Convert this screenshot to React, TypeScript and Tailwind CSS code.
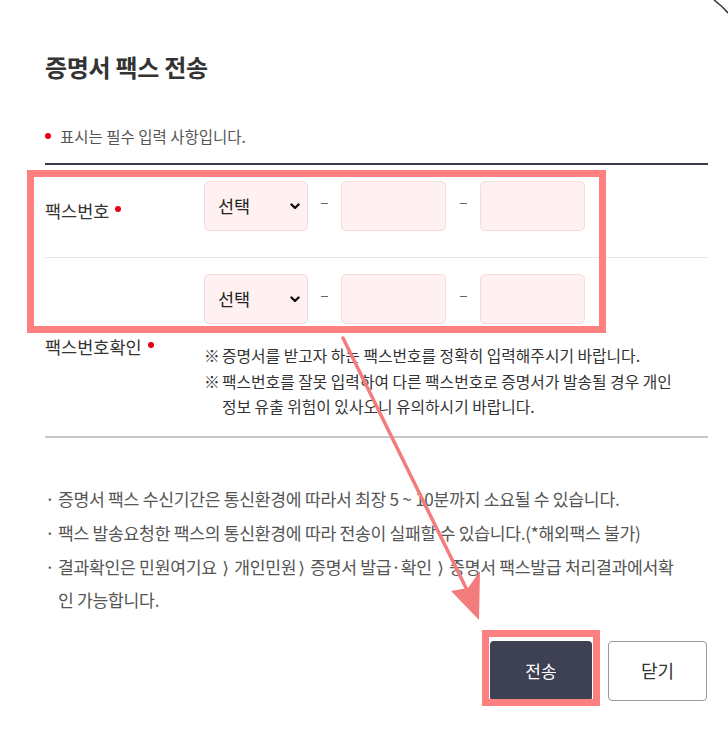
import React from "react";

const Dot = () => (
  <span className="inline-block w-[6px] h-[6px] rounded-full bg-[#e60012] align-middle" />
);

const Chevron = () => (
  <svg width="10" height="7" viewBox="0 0 10 7" className="shrink-0">
    <path d="M1.5 1.5 L5 5 L8.5 1.5" fill="none" stroke="#111" strokeWidth="2.4" strokeLinecap="round" strokeLinejoin="round" />
  </svg>
);

const PhoneInputs = () => (
  <div className="flex items-center">
    <div className="w-[104px] h-[50px] rounded-[5px] bg-[#fff1f1] border border-[#f7dada] flex items-center justify-between pl-[13px] pr-[7px]">
      <span className="text-[17.5px] text-[#222] leading-none">선택</span>
      <Chevron />
    </div>
    <div className="w-[33px] flex justify-center">
      <div className="w-[7px] h-px bg-[#666] -translate-y-[3px]" />
    </div>
    <div className="w-[105px] h-[50px] rounded-[5px] bg-[#fff1f1] border border-[#f7dada]" />
    <div className="w-[34px] flex justify-center">
      <div className="w-[7px] h-px bg-[#666] -translate-y-[3px]" />
    </div>
    <div className="w-[105px] h-[50px] rounded-[5px] bg-[#fff1f1] border border-[#f7dada]" />
  </div>
);

const Br = () => <span className="font-['DejaVu_Sans'] mx-[2px]">⟩</span>;

export default function App() {
  return (
    <div
      className="relative w-[728px] h-[741px] bg-white overflow-hidden text-[#333]"
      style={{ fontFamily: '"Noto Sans CJK KR", "Noto Sans", sans-serif' }}
    >
      <div className="pl-[45px] pr-[20px] pt-[52px]">
        <h1 className="text-[24px] font-bold leading-[30px] tracking-[-0.3px] text-[#333]">증명서 팩스 전송</h1>

        <div className="mt-[44px] pb-[17px] border-b-2 border-[#3c3c46] flex items-center leading-[20px]">
          <Dot />
          <span className="ml-[9px] text-[15.5px] text-[#555]">표시는 필수 입력 사항입니다.</span>
        </div>

        <div className="flex items-center border-b border-[#e6e6e6]">
          <div className="w-[159px] flex items-center text-[17.5px] leading-[22px]">
            <span>팩스번호</span>
            <span className="ml-[6px] -translate-y-[2px] inline-flex"><Dot /></span>
          </div>
          <div className="pt-[16px] pb-[26px]">
            <PhoneInputs />
          </div>
        </div>

        <div className="flex items-center border-b-2 border-[#c8c8c8]">
          <div className="w-[159px] flex items-center text-[17.5px] leading-[22px]">
            <span>팩스번호확인</span>
            <span className="ml-[6px] -translate-y-[2px] inline-flex"><Dot /></span>
          </div>
          <div className="pt-[16px] pb-[16px]">
            <PhoneInputs />
            <div className="mt-[19px] text-[15.8px] leading-[25.5px] text-[#333] whitespace-nowrap">
              <div className="flex">
                <span className="w-[18px] shrink-0">※</span>
                <span>증명서를 받고자 하는 팩스번호를 정확히 입력해주시기 바랍니다.</span>
              </div>
              <div className="flex">
                <span className="w-[18px] shrink-0">※</span>
                <span>
                  팩스번호를 잘못 입력하여 다른 팩스번호로 증명서가 발송될 경우 개인
                  <br />
                  정보 유출 위험이 있사오니 유의하시기 바랍니다.
                </span>
              </div>
            </div>
          </div>
        </div>

        <ul className="mt-[45px] flex flex-col gap-[3px] text-[17.2px] leading-[31px] text-[#555] tracking-[-0.3px]">
          <li className="flex">
            <span className="w-[13px] shrink-0">·</span>
            <span>증명서 팩스 수신기간은 통신환경에 따라서 최장 5 ~ 10분까지 소요될 수 있습니다.</span>
          </li>
          <li className="flex">
            <span className="w-[13px] shrink-0">·</span>
            <span>팩스 발송요청한 팩스의 통신환경에 따라 전송이 실패할 수 있습니다.(*해외팩스 불가)</span>
          </li>
          <li className="flex">
            <span className="w-[13px] shrink-0">·</span>
            <span className="whitespace-nowrap">
              결과확인은 민원여기요 <Br /> 개인민원<Br /> 증명서 발급·확인 <Br /> 증명서 팩스발급 처리결과에서확
              <br />
              인 가능합니다.
            </span>
          </li>
        </ul>

        <div className="mt-[26px] flex justify-end gap-[16px] pr-[1px]">
          <button className="w-[102px] h-[60px] rounded-[4px] bg-[#3e4053] text-white text-[17px]">전송</button>
          <button className="w-[99px] h-[60px] rounded-[4px] bg-white border border-[#9a9a9a] text-[#333] text-[18px]">닫기</button>
        </div>
      </div>

      {/* annotation overlays */}
      <div className="absolute left-[27px] top-[170px] w-[579px] h-[163px] border-[7px] border-[#ff8080] pointer-events-none" />
      <div className="absolute left-[482px] top-[630px] w-[118px] h-[76px] border-[7px] border-[#ff8080] pointer-events-none" />
      <svg className="absolute left-0 top-0 pointer-events-none" width="728" height="741" viewBox="0 0 728 741">
        <line x1="343" y1="338" x2="468" y2="592" stroke="#f47c7c" strokeWidth="3.5" strokeLinecap="round" />
        <polygon points="451,591 479,620 480,571 468,588" fill="#f47c7c" />
        <path d="M714 0 Q722 6 728 13" fill="none" stroke="#333" strokeWidth="1.5" />
      </svg>
    </div>
  );
}
